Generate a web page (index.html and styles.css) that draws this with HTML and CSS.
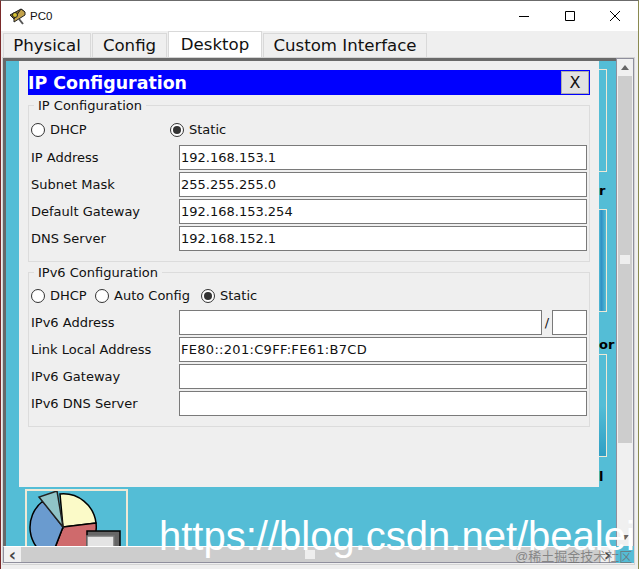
FILE: index.html
```html
<!DOCTYPE html>
<html lang="en">
<head>
  <meta charset="UTF-8">
  <title>PC0</title>
  <link rel="stylesheet" href="styles.css">
</head>
<body>
  <div class="window">
    <div class="titlebar">
      <svg class="app-icon" width="20" height="20" viewBox="0 0 20 20">
        <path d="M1 9 L12 3 L16 6 L5 13 Z" fill="#8a6d2a" stroke="#222"/>
        <path d="M12 3 L16 6 L16 9 L5 16 L5 13 Z" fill="#c2a24a" stroke="#222"/>
        <circle cx="6" cy="9" r="2.5" fill="#d6c332" stroke="#222"/>
        <path d="M10 13 L14 18" stroke="#555" stroke-width="2"/>
      </svg>
      <span class="title">PC0</span>
      <div class="win-btns">
        <svg width="12" height="12" viewBox="0 0 12 12"><path d="M1 6.5 H11" stroke="#000" fill="none"/></svg>
        <svg width="12" height="12" viewBox="0 0 12 12"><path d="M1.5 1.5 H10.5 V10.5 H1.5 Z" stroke="#000" fill="none"/></svg>
        <svg width="12" height="12" viewBox="0 0 12 12"><path d="M1 1 L11 11 M11 1 L1 11" stroke="#000" fill="none"/></svg>
      </div>
    </div>

    <div class="tabs">
      <div class="tab tab-physical">Physical</div>
      <div class="tab tab-config">Config</div>
      <div class="tab tab-desktop">Desktop</div>
      <div class="tab tab-custom">Custom Interface</div>
    </div>

    <div class="panel">
      <div class="viewport">
        <!-- desktop icons behind the dialog -->
        <div class="app-frame frame-a"></div>
        <div class="app-frame frame-b"></div>
        <div class="app-frame frame-c"></div>
        <span class="app-label label-a">r</span>
        <span class="app-label label-b">or</span>
        <span class="app-label label-c">l</span>
        <div class="app-frame frame-pie">
          <svg width="102" height="70" viewBox="0 0 102 70">
            <path d="M36 36 L33 3 A33 33 0 0 1 69 32 Z" fill="#fbfac8" stroke="#000" stroke-width="1.5"/>
            <path d="M36 36 L69 32 A33 33 0 0 1 24 67 Z" fill="#cf6a6c" stroke="#000" stroke-width="1.5"/>
            <path d="M36 36 L24 67 A33 33 0 0 1 16 10 Z" fill="#6a9bcf" stroke="#000" stroke-width="1.5"/>
            <path d="M36 36 L12 6 L30 0 Z" fill="#90c4c8" stroke="#222" stroke-width="1.5"/>
            <rect x="60" y="40" width="33" height="28" fill="#666" stroke="#000" stroke-width="1.5"/>
            <rect x="60" y="45" width="27" height="24" fill="#e4e4e4" stroke="#777" stroke-width="1.5"/>
          </svg>
        </div>

        <div class="dialog">
          <div class="dialog-head">
            <span class="dialog-title">IP Configuration</span>
            <span class="dialog-close">X</span>
          </div>

          <fieldset class="group group-v4">
            <legend>IP Configuration</legend>
            <div class="radios">
              <label class="radio radio-wide"><i class="dot"></i>DHCP</label>
              <label class="radio"><i class="dot on"></i>Static</label>
            </div>
            <div class="row"><span class="lbl">IP Address</span><div class="field">192.168.153.1</div></div>
            <div class="row"><span class="lbl">Subnet Mask</span><div class="field">255.255.255.0</div></div>
            <div class="row"><span class="lbl">Default Gateway</span><div class="field">192.168.153.254</div></div>
            <div class="row"><span class="lbl">DNS Server</span><div class="field">192.168.152.1</div></div>
          </fieldset>

          <fieldset class="group group-v6">
            <legend>IPv6 Configuration</legend>
            <div class="radios">
              <label class="radio radio-dhcp"><i class="dot"></i>DHCP</label>
              <label class="radio radio-auto"><i class="dot"></i>Auto Config</label>
              <label class="radio"><i class="dot on"></i>Static</label>
            </div>
            <div class="row">
              <span class="lbl">IPv6 Address</span>
              <div class="field"></div>
              <span class="slash">/</span>
              <div class="field field-prefix"></div>
            </div>
            <div class="row"><span class="lbl">Link Local Address</span><div class="field field-mono">FE80::201:C9FF:FE61:B7CD</div></div>
            <div class="row"><span class="lbl">IPv6 Gateway</span><div class="field"></div></div>
            <div class="row"><span class="lbl">IPv6 DNS Server</span><div class="field"></div></div>
          </fieldset>
        </div>
      </div>

      <div class="vscroll">
        <span class="arrow-up"></span>
        <div class="vthumb"><i class="grip"></i></div>
        <span class="arrow-down"></span>
      </div>

      <div class="hscroll">
        <span class="arrow">‹</span>
        <div class="hthumb"><i class="grip"></i></div>
        <span class="arrow">›</span>
      </div>
      <div class="corner"></div>
    </div>
  </div>

  <div class="watermark">https://blog.csdn.net/bealei</div>
  <div class="stamp">@稀土掘金技术社区</div>
</body>
</html>
```

FILE: styles.css
```css
* {
  box-sizing: border-box;
}
html, body {
  margin: 0;
  height: 100%;
  overflow: hidden;
}
body {
  position: relative;
  width: 639px;
  height: 569px;
  font-family: "DejaVu Sans", sans-serif;
  font-size: 13px;
  color: #111;
  background: #efefef;
}

.window {
  display: flex;
  flex-direction: column;
  width: 639px;
  height: 569px;
  border-top: 1px solid #6b6b6b;
  border-left: 1px solid #7a2a2a;
  border-right: 1px solid #8a8a50;
  background: #efefef;
}

/* title bar */
.titlebar {
  display: flex;
  align-items: center;
  flex: none;
  height: 30px;
  padding-left: 8px;
  background: #fff;
}
.app-icon {
  margin-right: 1px;
}
.title {
  font-family: "Liberation Sans", sans-serif;
  font-size: 11.5px;
}
.win-btns {
  display: flex;
  gap: 33.5px;
  margin-left: auto;
  padding-right: 17px;
}

/* tabs */
.tabs {
  display: flex;
  flex: none;
  align-items: flex-end;
  gap: 1px;
  height: 26px;
  padding-left: 2px;
}
.tab {
  height: 24px;
  border: 1px solid #d9d9d9;
  border-bottom: none;
  font-size: 16.6px;
  line-height: 24px;
  text-align: center;
  background: #efefef;
}
.tab-physical { width: 88px; }
.tab-config { width: 75px; }
.tab-desktop {
  width: 94px;
  height: 26px;
  line-height: 25px;
  background: #fff;
}
.tab-custom { width: 164px; }

/* main panel */
.panel {
  display: grid;
  grid-template-columns: 1fr 18px;
  grid-template-rows: 1fr 17px;
  flex: 1;
  min-height: 0;
  margin: 0 3px 4px 1px;
  padding-bottom: 1px;
  border: 1px solid #d4d4d4;
}
.viewport {
  position: relative;
  overflow: hidden;
  border-top: 3px solid #696969;
  border-left: 3px solid #696969;
  background: #54bdd6;
}
.corner {
  background: #54bdd6;
}

/* desktop icons */
.app-frame {
  position: absolute;
  border: 1px solid #efe9d6;
}
.frame-a { left: 592px; top: 8px; width: 9px; height: 103px; }
.frame-b { left: 592px; top: 148px; width: 9px; height: 103px; background: linear-gradient(90deg, #54bdd6, #2f8fc4 30%, #54bdd6); }
.frame-c { left: 592px; top: 293px; width: 9px; height: 103px; background: linear-gradient(#54bdd6 50%, #2f9fc4); }
.frame-pie {
  left: 19px;
  top: 428px;
  width: 103px;
  height: 70px;
  overflow: hidden;
  border-width: 2px;
}
.app-label {
  position: absolute;
  font-weight: bold;
  font-size: 13px;
  color: #000;
}
.label-a { left: 593px; top: 122px; }
.label-b { left: 593px; top: 276px; }
.label-c { left: 593px; top: 408px; }

/* dialog over the desktop */
.dialog {
  position: absolute;
  left: 13px;
  top: 0;
  width: 580px;
  height: 426px;
  padding: 9px 9px 0;
  background: #efefef;
}
.dialog-head {
  display: flex;
  align-items: center;
  justify-content: space-between;
  height: 25px;
  border: 1px solid #0000ff;
  background: #0000ff;
}
.dialog-title {
  margin-left: -1px;
  font-size: 17.4px;
  font-weight: bold;
  color: #fff;
}
.dialog-close {
  width: 28px;
  height: 23px;
  border: 1px solid #adadad;
  font-size: 16px;
  line-height: 21px;
  text-align: center;
  background: #e1e1e1;
}

/* field groups */
.group {
  min-width: 0;
  margin: 1px 0 0;
  padding: 0 2px;
  border: 1px solid #dcdcdc;
}
.group legend {
  margin-left: 3px;
  padding: 2px 4px 0;
  line-height: 16px;
}
.group-v4 {
  height: 166px;
}
.group-v6 {
  height: 164px;
}
.group-v4 .radios {
  height: 31px;
}
.group-v6 .radios {
  height: 29px;
}
.radios {
  display: flex;
  align-items: center;
}
.radio {
  display: flex;
  align-items: center;
  gap: 5px;
}
.radio-wide {
  width: 139px;
}
.radio-dhcp {
  width: 64px;
}
.radio-auto {
  width: 106px;
}
.dot {
  position: relative;
  width: 14px;
  height: 14px;
  border: 1px solid #333;
  border-radius: 50%;
  background: #fff;
}
.dot.on::after {
  content: "";
  position: absolute;
  left: 2px;
  top: 2px;
  width: 8px;
  height: 8px;
  border-radius: 50%;
  background: #333;
}
.row {
  display: flex;
  align-items: center;
  height: 25px;
  margin-bottom: 2px;
}
.lbl {
  flex: none;
  width: 148px;
}
.field {
  flex: 1;
  height: 25px;
  padding-left: 1px;
  border: 1px solid #7a7a7a;
  line-height: 24px;
  background: #fff;
}
.field-mono {
  letter-spacing: 0.3px;
}
.field-prefix {
  flex: none;
  width: 35px;
}
.slash {
  flex: none;
  width: 10px;
  text-align: center;
}

/* scrollbars */
.hscroll {
  display: flex;
  align-items: center;
  border: 1px solid #8f8f9d;
  border-top-color: #fff;
  border-right: none;
  background: #f0f0f0;
}
.arrow {
  flex: none;
  width: 17px;
  font-size: 18px;
  font-weight: bold;
  line-height: 14px;
  text-align: center;
  color: #444;
}
.hthumb {
  display: flex;
  align-items: center;
  justify-content: center;
  flex: 1;
  height: 15px;
  background: #cdcdcd;
}
.grip {
  width: 10px;
  height: 9px;
  background: #eee;
}
.vscroll {
  display: flex;
  flex-direction: column;
  border: 1px solid #8f8f9d;
  border-bottom: none;
  background: #f0f0f0;
}
.arrow-up {
  flex: none;
  width: 0;
  height: 0;
  margin: 6px auto 6px;
  border: 4px solid transparent;
  border-top: none;
  border-bottom: 5px solid #666;
}
.vthumb {
  display: flex;
  align-items: center;
  justify-content: center;
  flex: none;
  height: 367px;
  margin: 0 1px;
  background: #cdcdcd;
}
.arrow-down {
  flex: none;
  width: 0;
  height: 0;
  margin: auto auto 6px;
  border: 4px solid transparent;
  border-bottom: none;
  border-top: 5px solid #666;
}

/* text stamped over the screenshot */
.watermark {
  position: absolute;
  left: 159px;
  top: 512px;
  font-family: "Liberation Sans", sans-serif;
  font-size: 40px;
  line-height: 48px;
  white-space: nowrap;
  color: #fff;
}
.stamp {
  position: absolute;
  left: 515px;
  top: 548px;
  font-family: "Liberation Sans", "Noto Sans CJK SC", sans-serif;
  font-size: 13px;
  line-height: 17px;
  white-space: nowrap;
  color: rgba(110, 110, 110, 0.75);
}
```
